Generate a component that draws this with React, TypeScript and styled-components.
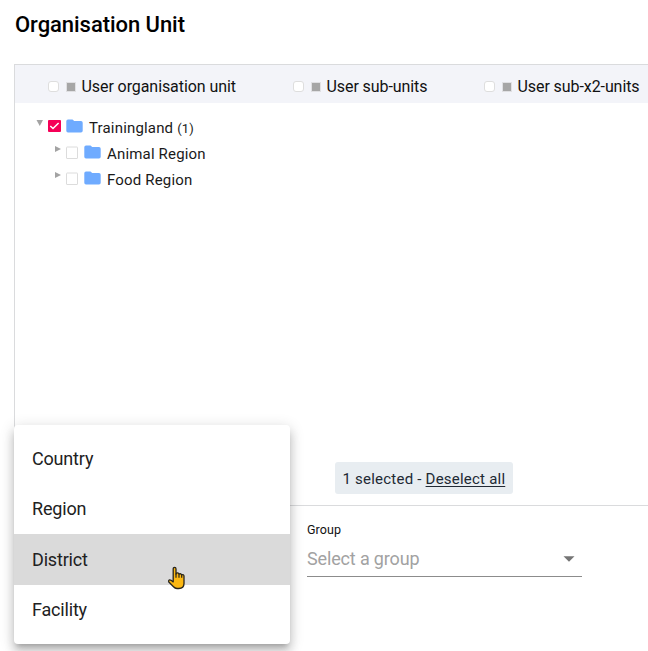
import React from 'react';
import styled, { createGlobalStyle } from 'styled-components';

const GlobalStyle = createGlobalStyle`
  * { box-sizing: border-box; }
  html, body { margin: 0; background: #fff; overflow: hidden; }
  body { font-family: Roboto, "Liberation Sans", sans-serif; color: #1c1c1c; }
`;

const Page = styled.main`
  position: relative;
  width: 648px;
  height: 651px;
  overflow: hidden;
  padding-left: 14px;
`;

const Title = styled.h1`
  margin: 0;
  height: 64px;
  padding: 12px 0 0 1px;
  font-size: 22px;
  line-height: 26px;
  font-weight: 500;
  letter-spacing: -0.05px;
  color: #000;
  white-space: nowrap;
`;

const Panel = styled.section`
  height: 442px;
  display: flex;
  flex-direction: column;
  border: 1px solid #dadbdd;
  border-right: 0;
`;

const LevelBar = styled.header`
  height: 38px;
  flex: none;
  display: flex;
  align-items: center;
  background: #f3f4f9;
  padding: 5px 0 0 33px;
`;

const LevelOption = styled.label<{ $width: number }>`
  width: ${(p) => p.$width}px;
  flex: none;
  display: flex;
  align-items: center;
  font-size: 16px;
  line-height: 20px;
  letter-spacing: -0.08px;
  color: #111;
  white-space: nowrap;
`;

const RoundBox = styled.span`
  width: 11px;
  height: 11px;
  border: 1px solid #dedede;
  border-radius: 3px;
  background: #fff;
  margin-right: 8px;
`;

const Square = styled.span`
  width: 8px;
  height: 8px;
  background: #a6a6a6;
  box-shadow: 0 0 0 1px #e0e0e3;
  margin-right: 6.5px;
`;

const Tree = styled.div`
  flex: 1;
  padding-top: 11px;
`;

const TreeRow = styled.div<{ $depth: number }>`
  height: 26px;
  padding-left: ${(p) => 20 + p.$depth * 18}px;
  display: flex;
  align-items: center;
  font-size: 15px;
  letter-spacing: 0.17px;
  color: #1a1a1a;
  white-space: nowrap;

  svg { flex: none; }
`;

const UnitName = styled.span`
  padding-top: 2px;
`;

const Twisty = styled.svg`
  width: 9px;
  height: 8px;
  margin: 0 4px 8px 0;
`;

const Check = styled.svg`
  width: 13px;
  height: 13px;
  margin: 0 5px 2px 0;
`;

const Folder = styled.svg`
  width: 17px;
  height: 14px;
  margin: 0 6px 2px 0;
`;

const Count = styled.span`
  font-size: 13px;
  margin-left: 4px;
`;

const SelectionBar = styled.div`
  display: flex;
  padding: 0 0 11px 320px;
`;

const Selection = styled.div`
  width: 178px;
  height: 32px;
  padding-left: 7.5px;
  border-radius: 3px;
  background: #e8edf1;
  font-size: 15px;
  line-height: 34px;
  letter-spacing: 0.22px;
  color: #212934;
  white-space: nowrap;
`;

const Deselect = styled.a`
  text-decoration: underline;
  text-underline-offset: 2px;
`;

const GroupField = styled.div`
  width: 275px;
  margin: 15px 0 0 293px;
  border-bottom: 1px solid #8c8c8c;
`;

const FieldLabel = styled.div`
  font-size: 12.5px;
  line-height: 18px;
  letter-spacing: 0.1px;
  color: #111;
`;

const FieldValue = styled.div`
  display: flex;
  justify-content: space-between;
  align-items: center;
  height: 37px;
  padding: 1px 7px 0 0;
  font-size: 18px;
  letter-spacing: -0.15px;
  color: #a2a2a2;
`;

const DropArrow = styled.svg`
  width: 12px;
  height: 6px;
  margin-top: 2px;
`;

const Menu = styled.ul`
  position: absolute;
  left: 14px;
  top: 425px;
  width: 276px;
  height: 219px;
  margin: 0;
  padding: 8px 0;
  list-style: none;
  background: #fff;
  border-radius: 4px;
  box-shadow: 0 5px 5px -3px rgba(0, 0, 0, .2), 0 8px 10px 1px rgba(0, 0, 0, .14), 0 3px 14px 2px rgba(0, 0, 0, .12);
`;

const MenuItem = styled.li<{ $active?: boolean }>`
  height: 50.5px;
  padding: 0 18px;
  display: flex;
  align-items: center;
  font-size: 18px;
  letter-spacing: -0.18px;
  color: #212121;
  background: ${(p) => (p.$active ? '#dadada' : 'transparent')};
`;

const Pointer = styled.svg`
  position: absolute;
  left: 167px;
  top: 566px;
  width: 20px;
  height: 24px;
`;

const levels = [
  { label: 'User organisation unit', width: 245 },
  { label: 'User sub-units', width: 191 },
  { label: 'User sub-x2-units', width: 180 },
];

const units = [
  { name: 'Trainingland', depth: 0, count: 1, open: true, checked: true },
  { name: 'Animal Region', depth: 1 },
  { name: 'Food Region', depth: 1 },
];

const menuItems = ['Country', 'Region', 'District', 'Facility'];

const CheckBox = ({ checked }: { checked?: boolean }) => (
  <Check viewBox="0 0 13 13">
    {checked ? (
      <>
        <rect width="13" height="12" rx="1" fill="#f50057" />
        <path d="M2.3 6 5 8.5 10.6 3" fill="none" stroke="#fff" strokeWidth="1.5" />
      </>
    ) : (
      <rect x=".5" y="1" width="11" height="11.5" rx=".5" fill="#fff" stroke="#dcdcdc" />
    )}
  </Check>
);

export default function App() {
  return (
    <>
      <GlobalStyle />
      <Page>
        <Title>Organisation Unit</Title>
        <Panel>
          <LevelBar>
            {levels.map((l) => (
              <LevelOption key={l.label} $width={l.width}>
                <RoundBox />
                <Square />
                {l.label}
              </LevelOption>
            ))}
          </LevelBar>
          <Tree>
            {units.map((u) => (
              <TreeRow key={u.name} $depth={u.depth}>
                <Twisty viewBox="0 0 9 8">
                  <path d={u.open ? 'M1.5 1h6.5L4.75 7z' : 'M2 1v6l6-3z'} fill="#a3a3a3" />
                </Twisty>
                <CheckBox checked={u.checked} />
                <Folder viewBox="0 0 17 14">
                  <path d="M2 .5h4.5L8.2 2H15q1.7 0 1.7 1.7v8q0 1.7-1.7 1.7H2Q.3 13.4.3 11.7V2.2Q.3.5 2 .5z" fill="#6fabff" />
                </Folder>
                <UnitName>
                  {u.name}
                  {u.count && <Count>({u.count})</Count>}
                </UnitName>
              </TreeRow>
            ))}
          </Tree>
          <SelectionBar>
            <Selection>
              1 selected - <Deselect>Deselect all</Deselect>
            </Selection>
          </SelectionBar>
        </Panel>
        <GroupField>
          <FieldLabel>Group</FieldLabel>
          <FieldValue>
            Select a group
            <DropArrow viewBox="0 0 12 6">
              <path d="M.5.3h11L6 5.8z" fill="#757575" />
            </DropArrow>
          </FieldValue>
        </GroupField>
        <Menu>
          {menuItems.map((item) => (
            <MenuItem key={item} $active={item === 'District'}>
              {item}
            </MenuItem>
          ))}
        </Menu>
        <Pointer viewBox="0 0 20 24">
          <path
            d="M6.2 12.8V3Q6.2 1.4 7.6 1.4T9 3v5q.4-1.3 1.6-1.2t1.4 1.3q2-1 2.7.7 2.1-.8 2.3 1.3v7.5q0 4.9-5.2 4.9H10q-2 0-3.5-1.7L1.8 16q-.6-1.7.7-2.1 1.3-.2 3.7 2z"
            fill="#fcb813"
            stroke="#29251c"
            strokeWidth="1.3"
            strokeLinejoin="round"
          />
          <path d="M9 7.5v4.2M12 8.2v3.5M14.7 8.8v3" stroke="#29251c" strokeWidth="1.2" fill="none" />
        </Pointer>
      </Page>
    </>
  );
}
